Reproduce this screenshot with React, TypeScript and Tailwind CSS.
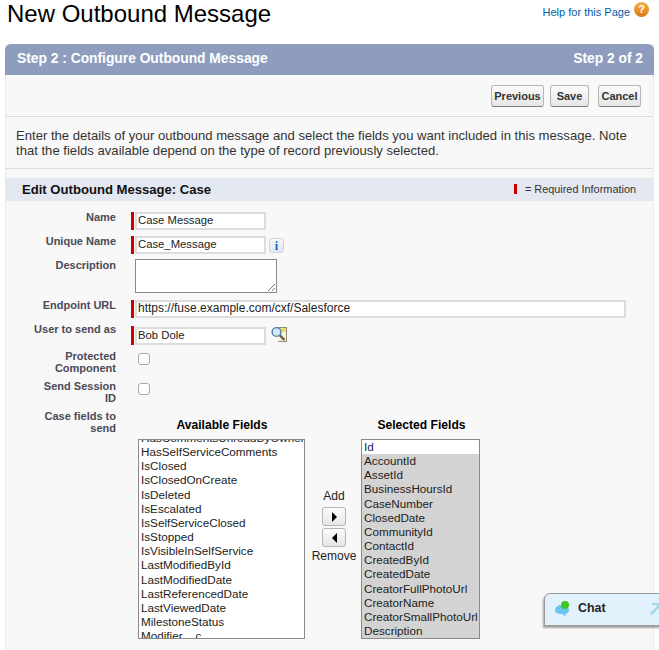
import React from 'react';

const available = [
  'HasSelfServiceComments',
  'IsClosed',
  'IsClosedOnCreate',
  'IsDeleted',
  'IsEscalated',
  'IsSelfServiceClosed',
  'IsStopped',
  'IsVisibleInSelfService',
  'LastModifiedById',
  'LastModifiedDate',
  'LastReferencedDate',
  'LastViewedDate',
  'MilestoneStatus',
  'Modifier__c',
];

const selected = [
  'AccountId',
  'AssetId',
  'BusinessHoursId',
  'CaseNumber',
  'ClosedDate',
  'CommunityId',
  'ContactId',
  'CreatedById',
  'CreatedDate',
  'CreatorFullPhotoUrl',
  'CreatorName',
  'CreatorSmallPhotoUrl',
  'Description',
];

const Button: React.FC<{ label: string; className: string }> = ({ label, className }) => (
  <button
    className={`h-[22px] rounded-[3px] border border-[#b5b5b5] border-b-[#7f7f7f] bg-gradient-to-b from-[#fbfbfb] to-[#e6e6e6] text-[11px] font-bold text-[#333] ${className}`}
  >
    {label}
  </button>
);

const Row: React.FC<{
  label: React.ReactNode;
  className: string;
  fieldClass?: string;
  children: React.ReactNode;
}> = ({ label, className, fieldClass = 'mt-[1px]', children }) => (
  <div className={`flex ${className}`}>
    <div className="w-[110px] shrink-0 text-right text-[11px] leading-[12px] font-bold text-[#4a4a56]">{label}</div>
    <div className={`ml-[15px] flex items-start ${fieldClass}`}>{children}</div>
  </div>
);

const Required = ({ className }: { className: string }) => <span className={`w-[3px] bg-[#c00] ${className}`} />;

const TextInput: React.FC<{ value: string; className: string }> = ({ value, className }) => (
  <div className={`ml-[1px] flex h-[18px] items-center border-2 border-[#dcdcdc] bg-white pb-[2px] pl-[1px] text-[#222] ${className}`}>
    {value}
  </div>
);

const App: React.FC = () => {
  return (
    <div className="relative h-[650px] w-[659px] overflow-hidden bg-white font-['Liberation_Sans',Arial,sans-serif]">
      <div className="flex h-[44px] items-start justify-between pl-[7px] pr-[10px]">
        <h1 className="mt-[-2px] text-[24px] leading-[31px] text-black">New Outbound Message</h1>
        <div className="mt-[2px] flex items-start gap-[4px]">
          <span className="mt-[2px] text-[11px] text-[#015ba7]">Help for this Page</span>
          <span className="flex h-[15px] w-[15px] items-center justify-center rounded-full bg-gradient-to-b from-[#f5b042] to-[#d9780f] text-[11px] font-bold text-white">
            ?
          </span>
        </div>
      </div>

      <div className="mx-[5px] h-[606px] border-x border-[#eaeaea] bg-[#f8f8f8]">
        <div className="-mx-[1px] flex h-[31px] items-center justify-between rounded-t-[6px] bg-[#8e9dbe] pl-[12px] pr-[11px] text-[13.8px] font-bold text-white">
          <span>Step 2 : Configure Outbound Message</span>
          <span>Step 2 of 2</span>
        </div>

        <div className="flex h-[42px] items-center justify-end border-b border-[#dbdbdb] pr-[12px] pt-[1px]">
          <Button label="Previous" className="w-[53px]" />
          <Button label="Save" className="ml-[6px] w-[39px]" />
          <Button label="Cancel" className="ml-[9px] w-[43px]" />
        </div>

        <div className="h-[52px] border-b border-[#dbdbdb] pl-[10px] pt-[11px] text-[13.1px] leading-[15px] text-[#333]">
          Enter the details of your outbound message and select the fields you want included in this message. Note
          <br />
          that the fields available depend on the type of record previously selected.
        </div>

        <div className="mt-[9px] flex h-[23px] items-center justify-between bg-[#e3e7f0] pl-[16px] pr-[17px]">
          <span className="text-[13.1px] font-bold text-[#111]">Edit Outbound Message: Case</span>
          <span className="flex items-center text-[10.9px] text-[#333]">
            <span className="mr-[5px] h-[10px] w-[3px] bg-[#c00]" />
            <span className="ml-[3px]">= Required Information</span>
          </span>
        </div>

        <div className="pt-[10px]">
          <Row label="Name" className="h-[24px] pt-[4px] -mt-[4px]">
            <Required className="h-[18px]" />
            <TextInput value="Case Message" className="w-[131px] text-[11.3px]" />
          </Row>
          <Row label="Unique Name" className="h-[24px] pt-[4px]">
            <Required className="h-[18px]" />
            <TextInput value="Case_Message" className="w-[131px] text-[11.3px]" />
            <span className="ml-[3px] flex h-[15px] w-[15px] mt-[2px] items-center justify-center rounded-[3px] border border-[#d0d4d8] bg-gradient-to-b from-[#f6f9fc] to-[#dfe8f2] font-['Liberation_Serif',serif] text-[12px] font-bold text-[#1463c9]">
              i
            </span>
          </Row>
          <Row label="Description" className="h-[40px] pt-[4px]" fieldClass="">
            <div className="relative ml-[4px] h-[34px] w-[142px] border border-[#8a8a8a] bg-white">
              <svg className="absolute bottom-0 right-0" width="9" height="9" viewBox="0 0 9 9">
                <path d="M1 8 L8 1 M5 8 L8 5" stroke="#777" strokeWidth="1" fill="none" />
              </svg>
            </div>
          </Row>
          <Row label="Endpoint URL" className="h-[26px] pt-[4px]">
            <Required className="h-[18px]" />
            <TextInput value="https://fuse.example.com/cxf/Salesforce" className="w-[491px] text-[12px]" />
          </Row>
          <Row label="User to send as" className="h-[28px] pt-[2px]" fieldClass="mt-[3px]">
            <Required className="h-[19px]" />
            <TextInput value="Bob Dole" className="mt-[1px] w-[131px] text-[11.3px]" />
            <svg className="ml-[5px]" width="17" height="17" viewBox="0 0 17 17">
              <path d="M5 1.5 H15.5 V15.5 H7" fill="#f7f3e4" stroke="#8b8b7a" strokeWidth="1" />
              <rect x="9" y="2" width="6" height="4" fill="#f8d777" />
              <path d="M8.5 9 L13.5 14" stroke="#6f5a3a" strokeWidth="2.4" />
              <circle cx="5.5" cy="6" r="4.4" fill="#cfe6f7" stroke="#4d7ea8" strokeWidth="1.4" />
            </svg>
          </Row>
          <Row label={<>Protected<br />Component</>} className="h-[30px] pt-[1px]">
            <input type="checkbox" readOnly className="ml-[7px] mt-[2px] h-[12px] w-[12px] appearance-none rounded-[3px] border border-[#a9a9a9] bg-white" />
          </Row>
          <Row label={<>Send Session<br />ID</>} className="h-[30px] pt-[1px]">
            <input type="checkbox" readOnly className="ml-[7px] mt-[2px] h-[12px] w-[12px] appearance-none rounded-[3px] border border-[#a9a9a9] bg-white" />
          </Row>
          <Row label={<>Case fields to<br />send</>} className="pt-[1px]">
            <div className="ml-[7px] flex items-start pt-[7px]">
              <div className="w-[167px]">
                <div className="h-[21px] pl-[1px] text-center text-[12.1px] leading-[14px] font-bold text-black">Available Fields</div>
                <div className="h-[200px] overflow-hidden border border-[#8a8a8a] bg-white pl-[2px] text-[11.7px] leading-[14.15px] text-[#222]">
                  <div className="-mt-[9px]">HasCommentsUnreadByOwner</div>
                  {available.map((field) => (
                    <div key={field}>{field}</div>
                  ))}
                </div>
              </div>

              <div className="flex w-[56px] flex-col items-center pl-[2px] pt-[71px] text-[12px] text-[#222]">
                <span className="leading-[14px]">Add</span>
                <button className="mt-[4px] flex h-[19px] w-[24px] items-center justify-center rounded-[3px] border border-[#b5b5b5] bg-gradient-to-b from-[#fbfbfb] to-[#e6e6e6]">
                  <span className="h-0 w-0 border-y-[5px] border-l-[5px] border-y-transparent border-l-black" />
                </button>
                <button className="mt-[2px] flex h-[19px] w-[24px] items-center justify-center rounded-[3px] border border-[#b5b5b5] bg-gradient-to-b from-[#fbfbfb] to-[#e6e6e6]">
                  <span className="h-0 w-0 border-y-[5px] border-r-[5px] border-y-transparent border-r-black" />
                </button>
                <span className="mt-[2px] leading-[14px]">Remove</span>
              </div>

              <div className="w-[119px]">
                <div className="h-[21px] pl-[2px] text-center text-[12.1px] leading-[14px] font-bold text-black">Selected Fields</div>
                <div className="h-[200px] overflow-hidden border border-[#8a8a8a] bg-[#d3d3d3] text-[11.7px] leading-[14.15px] text-[#222]">
                  <div className="bg-white pl-[2px] text-[#15256b]">Id</div>
                  {selected.map((field) => (
                    <div key={field} className="pl-[2px]">
                      {field}
                    </div>
                  ))}
                </div>
              </div>
            </div>
          </Row>
        </div>
      </div>

      {/* chat widget docked over the page */}
      <div className="absolute left-[544px] top-[593px] flex h-[33px] w-[130px] items-center rounded-tl-[6px] border border-[#9a9a9a] bg-[#e2f2fd] pb-[2px] shadow-[-1px_2px_2px_rgba(0,0,0,0.35)]">
        <svg className="ml-[9px]" width="17" height="18" viewBox="0 0 17 18">
          <path d="M1 10 C1 7 4 5 8 5 C12 5 15 7 15 10 C15 13 12 14 11 14 L12 17 L8 14 C4 14 1 13 1 10 Z" fill="#6cc5ef" />
          <circle cx="11" cy="5" r="4" fill="#3fc422" />
        </svg>
        <span className="ml-[7px] text-[12.4px] font-bold text-[#222]">Chat</span>
        <svg className="ml-[44px]" width="12" height="12" viewBox="0 0 12 12">
          <path d="M2 1 H11 V10 M11 1 L1 11" stroke="#a3d7ee" strokeWidth="2.6" fill="none" />
        </svg>
      </div>
    </div>
  );
};

export default App;
